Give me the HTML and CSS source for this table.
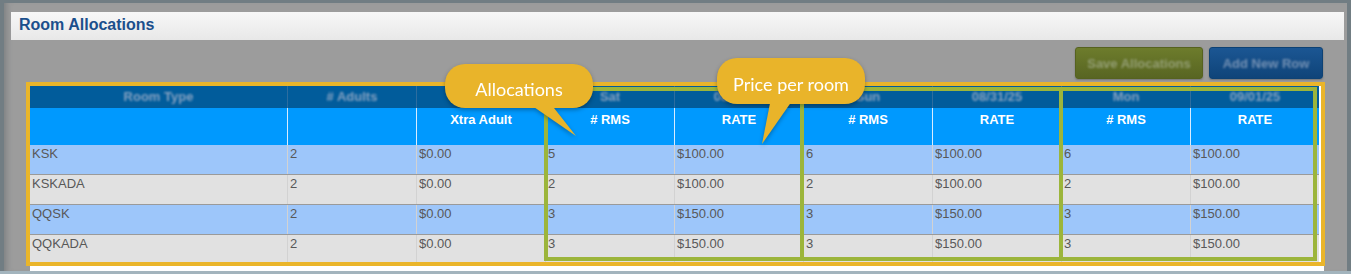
FILE: index.html
```html
<!DOCTYPE html>
<html lang="en">
<head>
<meta charset="utf-8">
<title>Room Allocations</title>
<link rel="stylesheet" href="styles.css">
</head>
<body>
<div class="frame">
  <div class="titlebar"><h1 class="title">Room Allocations</h1></div>
  <div class="toolbar">
    <button class="btn btn-save"><span class="blur">Save Allocations</span></button>
    <button class="btn btn-add"><span class="blur">Add New Row</span></button>
  </div>
  <div class="highlight">
    <div class="grid">
      <div class="row head1">
        <div class="cell"><span class="blur">Room Type</span></div>
        <div class="cell"><span class="blur"># Adults</span></div>
        <div class="cell"></div>
        <div class="cell"><span class="blur">Sat</span></div>
        <div class="cell"><span class="blur">08/30/25</span></div>
        <div class="cell"><span class="blur">Sun</span></div>
        <div class="cell"><span class="blur">08/31/25</span></div>
        <div class="cell"><span class="blur">Mon</span></div>
        <div class="cell"><span class="blur">09/01/25</span></div>
      </div>
      <div class="row head2">
        <div class="cell"></div>
        <div class="cell"></div>
        <div class="cell">Xtra Adult</div>
        <div class="cell"># RMS</div>
        <div class="cell">RATE</div>
        <div class="cell"># RMS</div>
        <div class="cell">RATE</div>
        <div class="cell"># RMS</div>
        <div class="cell">RATE</div>
      </div>
      <div class="row data odd">
        <div class="cell">KSK</div><div class="cell">2</div><div class="cell">$0.00</div>
        <div class="cell">5</div><div class="cell">$100.00</div>
        <div class="cell">6</div><div class="cell">$100.00</div>
        <div class="cell">6</div><div class="cell">$100.00</div>
      </div>
      <div class="row data even">
        <div class="cell">KSKADA</div><div class="cell">2</div><div class="cell">$0.00</div>
        <div class="cell">2</div><div class="cell">$100.00</div>
        <div class="cell">2</div><div class="cell">$100.00</div>
        <div class="cell">2</div><div class="cell">$100.00</div>
      </div>
      <div class="row data odd">
        <div class="cell">QQSK</div><div class="cell">2</div><div class="cell">$0.00</div>
        <div class="cell">3</div><div class="cell">$150.00</div>
        <div class="cell">3</div><div class="cell">$150.00</div>
        <div class="cell">3</div><div class="cell">$150.00</div>
      </div>
      <div class="row data even">
        <div class="cell">QQKADA</div><div class="cell">2</div><div class="cell">$0.00</div>
        <div class="cell">3</div><div class="cell">$150.00</div>
        <div class="cell">3</div><div class="cell">$150.00</div>
        <div class="cell">3</div><div class="cell">$150.00</div>
      </div>
    </div>
    <div class="gbox gbox-1"></div>
    <div class="gbox gbox-2"></div>
    <div class="gbox gbox-3"></div>
  </div>
  <div class="strip"></div>

  <div class="callout callout-alloc">
    <svg class="tail" width="148" height="100" viewBox="0 0 148 100"><polygon points="70,30 98,30 131,72"/></svg>
    <span class="callout-text">Allocations</span>
  </div>
  <div class="callout callout-price">
    <svg class="tail" width="148" height="100" viewBox="0 0 148 100"><polygon points="56,30 84,30 45,86"/></svg>
    <span class="callout-text">Price per room</span>
  </div>
</div>
</body>
</html>
```

FILE: styles.css
```css
* { box-sizing: border-box; }

html, body {
  margin: 0;
  padding: 0;
}

body {
  width: 1351px;
  height: 274px;
  overflow: hidden;
  background: #717d83;
  border-bottom: 3px solid #a3b4bd;
  font-family: "Liberation Sans", Arial, Helvetica, sans-serif;
}

.frame {
  position: relative;
  margin: 3px 4px 0 4px;
  width: 1343px;
  height: 268px;
  background: #9c9c9c;
  box-shadow: inset 7px 0 6px -5px rgba(60, 70, 75, 0.35);
  padding-top: 9px;
}

.titlebar {
  margin-left: 7px;
  width: 1333px;
  height: 28px;
  background: linear-gradient(#f7f7f7, #e8e8e8);
  display: flex;
  align-items: center;
  padding-left: 8px;
}

.title {
  margin: 0;
  font-size: 16px;
  font-weight: bold;
  color: #1b4f8c;
  line-height: 1;
  position: relative;
  top: -1px;
}

.toolbar {
  display: flex;
  justify-content: flex-end;
  gap: 6px;
  margin-top: 7px;
  padding-right: 24px;
  height: 32px;
}

.btn {
  height: 32px;
  border-radius: 3px;
  font-family: "Liberation Sans", Arial, sans-serif;
  font-size: 13px;
  font-weight: bold;
  padding: 0;
  box-shadow: 0 1px 2px rgba(0, 0, 0, 0.25);
}

.btn-save {
  width: 128px;
  background: linear-gradient(#6d7c2c, #586522);
  border: 1px solid #56621f;
  color: #949f74;
}

.btn-add {
  width: 114px;
  background: linear-gradient(#1b5693, #0f4479);
  border: 1px solid #0e4274;
  color: #7491b4;
}

.blur {
  display: inline-block;
  filter: blur(1.2px);
}

.highlight {
  position: relative;
  margin-top: 3px;
  margin-left: 22px;
  width: 1299px;
  height: 184px;
  border: 4px solid #eab52a;
  background: #ffffff;
  overflow: hidden;
}

.grid {
  width: 1289px;
}

.row {
  display: grid;
  grid-template-columns: 257px repeat(8, 129px);
}

.cell {
  border-left: 1px solid transparent;
  overflow: hidden;
  white-space: nowrap;
}

.cell:first-child { border-left: none; }

.head1 {
  height: 22px;
  background: #015c9b;
}

.head1 .cell {
  border-left-color: #2d6d9f;
  text-align: center;
  font-size: 13px;
  font-weight: bold;
  color: #86a2c2;
  line-height: 22px;
}

.head2 {
  height: 37px;
  background: #0099fe;
}

.head2 .cell {
  border-left-color: #d8ecff;
  text-align: center;
  font-size: 13px;
  font-weight: bold;
  color: #ffffff;
  padding-top: 4px;
  line-height: 15px;
}

.data {
  height: 30px;
  border-top: 1px solid #9a9a9a;
}

.data:nth-child(3) {
  height: 29px;
  border-top: none;
}

.data .cell {
  border-left-color: #d2d2d2;
  font-size: 13px;
  color: #585858;
  padding: 1px 0 0 2px;
  line-height: 15px;
}

.odd { background: #9dc6fa; }
.even { background: #e1e1e1; }

.gbox {
  position: absolute;
  top: 1px;
  height: 174px;
  border: 4px solid #9cb53b;
}

.gbox-1 { left: 514px; width: 260px; }
.gbox-2 { left: 770px; width: 263px; }
.gbox-3 { left: 1029px; width: 258px; }

.strip {
  margin-left: 26px;
  width: 1294px;
  height: 5px;
  background: #ffffff;
}

.callout {
  position: absolute;
  width: 148px;
  background: #e9b42a;
  border-radius: 20px;
  display: flex;
  align-items: center;
  justify-content: center;
  padding-top: 6px;
  filter: drop-shadow(0 2px 2px rgba(0, 0, 0, 0.3));
}

.callout-alloc { left: 441px; top: 61px; height: 44px; }
.callout-price { left: 713px; top: 55px; height: 46px; }

.tail {
  position: absolute;
  left: 0;
  top: 0;
  overflow: visible;
  fill: #e9b42a;
}

.callout-text {
  position: relative;
  font-family: Lato, "Open Sans", sans-serif;
  font-size: 18px;
  color: #ffffff;
  white-space: nowrap;
}
```
